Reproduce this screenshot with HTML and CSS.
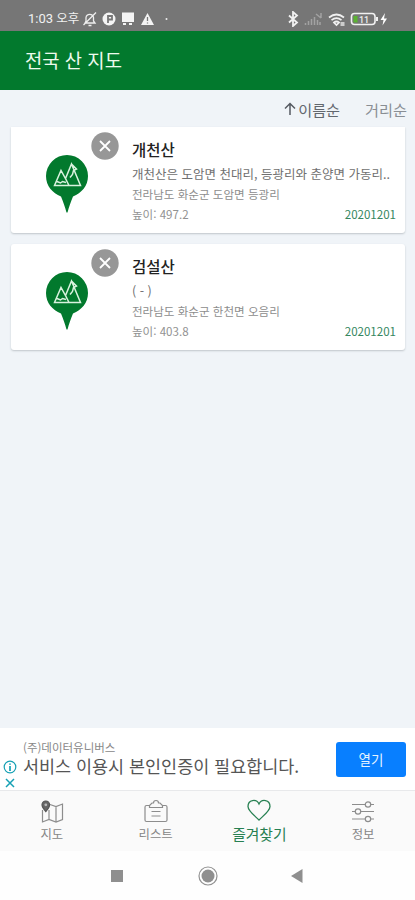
FILE: index.html
```html
<!DOCTYPE html>
<html lang="ko">
<head>
<meta charset="utf-8">
<meta name="viewport" content="width=device-width, initial-scale=1">
<title>전국 산 지도</title>
<link rel="stylesheet" href="styles.css">
</head>
<body>
<svg width="0" height="0" class="defs">
  <symbol id="pin" viewBox="0 0 42 59">
    <path d="M21 0a21 21 0 0 1 21 21c0 10-6.500 17-15 20.500-2 5-4 10-5.500 16h-1C19 51.500 17 46.500 15 41.500 6.500 38 0 31 0 21A21 21 0 0 1 21 0z" fill="#02792d"/>
    <path d="M8.500 30.500 15 15.500l4.500 8 6-14.500L34.500 30.500zM19.500 23.500 23 30.500M11 26.500l3.500 1.500 2-1.500 3.500 1M25.500 9l5 5-3 1.500-1 4-2.500 3" fill="none" stroke="#d9f2de" stroke-width="1.500"/>
  </symbol>
  <symbol id="close" viewBox="0 0 28 28">
    <circle cx="14" cy="14" r="13.700" fill="#979797"/>
    <path d="m9 9 10 10M19 9 9 19" stroke="#fff" stroke-width="1.800"/>
  </symbol>
</svg>
<div class="screen">
  <div class="status">
    <span class="clock">1:03 <span class="ampm">오후</span></span>
    <svg class="notices" width="88" height="16" viewBox="0 0 88 16" fill="none" stroke="#eee" stroke-width="1.300">
      <path d="M3 12h10l-1.500-2V6.500a3.800 3.800 0 0 0-7.500 0V10zM6.500 14.500h3M1.500 14 14 1.500"/>
      <circle cx="27" cy="8" r="6.500" fill="#f4f4f4" stroke="none"/>
      <path d="M26 12V5h4v3.500h-4" stroke="#777" stroke-width="1.800"/>
      <path d="M40 1.500h12v9.500H40zM41 12h3v2h-3zM47 12h3v2h-3z" fill="#f4f4f4" stroke="none"/>
      <path d="m65.500 2 6.500 12H59z" fill="#f4f4f4" stroke="none"/>
      <path d="M65.500 6v4M65.500 11.500v1" stroke="#777"/>
      <circle cx="84.500" cy="8" r="1" fill="#eee" stroke="none"/>
    </svg>
    <svg class="radios" width="102" height="16" viewBox="0 0 102 16" fill="none" stroke="#f1f1f1">
      <path d="m3 4.500 8 7-4 3.500V1l4 3.500-8 7" stroke-width="1.800"/>
      <path d="M19.500 14v-2M22.500 14v-4M25.500 14V8M28.500 14V6M31.500 14V9M34 14v-3M30 3l5 4M35 2v5" stroke="#a2a2a2" stroke-width="1.500"/>
      <path d="M43 6.500q7.500-6 15 0M45.500 9.200q5-4 10 0M48 11.500q2.500-2 5 0l-2.500 2.500z" stroke-width="1.700"/>
      <path d="M54.500 11h4v4h-4z" fill="#ccc" stroke="none"/>
      <rect x="65.500" y="2.500" width="23.500" height="11" rx="3" stroke-width="1.600"/>
      <path d="M67.500 5h4v6.500h-4z" fill="#5bb332" stroke="none"/>
      <path d="M91 6v4" stroke-width="2"/>
      <path d="m99 2-4.500 7h3l-1 5.500 4.500-7h-3z" fill="#fff" stroke="none"/>
      <text x="73" y="11.500" class="charge">11</text>
    </svg>
  </div>
  <header class="appbar">전국 산 지도</header>
  <main class="content">
    <div class="sort">
      <span class="sort-item active"><svg width="12" height="13" viewBox="0 0 12 13" fill="none" stroke="#555a61" stroke-width="1.500"><path d="M6 13V1.500M1 6.500l5-5 5 5"/></svg>이름순</span>
      <span class="sort-item">거리순</span>
    </div>
    <article class="card first">
      <div class="thumb"><svg class="pin"><use href="#pin"/></svg><svg class="close"><use href="#close"/></svg></div>
      <div class="info">
        <h2>개천산</h2>
        <p class="desc">개천산은 도암면 천대리, 등광리와 춘양면 가동리..</p>
        <p class="addr">전라남도 화순군 도암면 등광리</p>
        <div class="meta"><span>높이: 497.2</span><time>20201201</time></div>
      </div>
    </article>
    <article class="card">
      <div class="thumb"><svg class="pin"><use href="#pin"/></svg><svg class="close"><use href="#close"/></svg></div>
      <div class="info">
        <h2>검설산</h2>
        <p class="desc">( - )</p>
        <p class="addr">전라남도 화순군 한천면 오음리</p>
        <div class="meta"><span>높이: 403.8</span><time>20201201</time></div>
      </div>
    </article>
  </main>
  <aside class="ad">
    <svg class="adchoices" width="14" height="30" viewBox="0 0 14 30" fill="none" stroke="#16a0b4" stroke-width="1.200">
      <circle cx="7" cy="7" r="5.800"/><path d="M7 6v5M7 3.500v1.300" stroke-width="1.700"/><path d="m3 19 8 8M11 19l-8 8" stroke-width="1.500"/>
    </svg>
    <div class="ad-text"><div class="ad-brand">(주)데이터유니버스</div><div class="ad-copy">서비스 이용시 본인인증이 필요합니다.</div></div>
    <button class="open">열기</button>
  </aside>
  <nav class="tabs">
    <div class="tab">
      <svg width="26" height="26" viewBox="0 0 26 26" fill="none" stroke="#8d8d8d" stroke-width="1.200"><path d="M3.500 11v12l6.500-2.500 7 2.500 6.500-2.500V5L17 7.500 11 5.500M10 11v9.500M17 7.500V23"/><path d="M6.800 12.500C4.500 10 3 8 3 5.800a3.800 3.800 0 0 1 7.600 0c0 2.200-1.500 4.200-3.800 6.700z" fill="#666" stroke="#555"/><circle cx="6.800" cy="5.800" r="1.400" fill="#bbb" stroke="none"/></svg>
      <span>지도</span>
    </div>
    <div class="tab">
      <svg width="26" height="26" viewBox="0 0 26 26" fill="none" stroke="#8d8d8d" stroke-width="1.200"><path d="M6.500 6.500h-3Q2 6.500 2 8v13q0 1.500 1.500 1.500h19Q24 22.500 24 21V8q0-1.500-1.500-1.500h-3M6.500 8.500V6.500L9 4h1.500q0-2.500 2.500-2.500T15.500 4H17l2.500 2.500v2zM8.500 12.500h9M8.500 17h9"/></svg>
      <span>리스트</span>
    </div>
    <div class="tab selected">
      <svg width="26" height="26" viewBox="0 0 26 26" fill="none" stroke="#278052" stroke-width="1.300"><path d="M13 21C9 17 2 12 2 7.500 2 .5 10.500-.5 13 5c2.500-5.500 11-4.500 11 2.500 0 4.500-7 9.500-11 13.500z"/></svg>
      <span>즐겨찾기</span>
    </div>
    <div class="tab">
      <svg width="26" height="26" viewBox="0 0 26 26" fill="none" stroke="#8d8d8d" stroke-width="1.200"><path d="M2 5.500h13M21 5.500h3M2 12.500h3M11 12.500h13M2 20h13M21 20h3"/><circle cx="18" cy="5.500" r="2.700"/><circle cx="8" cy="12.500" r="2.700"/><circle cx="18" cy="20" r="2.700"/></svg>
      <span>정보</span>
    </div>
  </nav>
  <div class="sysnav">
    <svg width="194" height="22" viewBox="0 0 194 22"><path d="M1 5h12v12H1z" fill="#8f8f8f"/><circle cx="98" cy="11" r="9" fill="none" stroke="#929292" stroke-width="1.200"/><circle cx="98" cy="11" r="6.500" fill="#8f8f8f"/><path d="m181 11 11.500-7v14z" fill="#8f8f8f"/></svg>
  </div>
</div>
</body>
</html>
```
FILE: styles.css
```css
* { box-sizing: border-box; }
body { margin: 0; font-family: "Noto Sans CJK KR", sans-serif; }
h2, p { margin: 0; }
svg { display: block; flex: none; }
.defs { position: absolute; }
.screen { width: 415px; height: 900px; display: flex; flex-direction: column; overflow: hidden; background: #f0f4f8; }
.status { height: 31px; flex: none; background: #767676; display: flex; align-items: center; padding: 7px 27px 0 28px; color: #f1f1f1; }
.clock { width: 54px; font: 400 13px/16px Roboto, "Noto Sans CJK KR", sans-serif; white-space: nowrap; }
.ampm { font-size: 12.500px; }
.radios { margin-left: auto; }
.charge { font: 500 9px "Roboto", sans-serif; fill: #eee; stroke: none; }
.appbar { height: 59px; flex: none; background: #02792d; color: #eefbed; font-size: 18.800px; line-height: 58px; padding-left: 25px; }
.content { flex: 1; padding: 0 10px; }
.sort { height: 37px; display: flex; justify-content: flex-end; gap: 25px; margin-right: -2px; line-height: 38px; }
.sort-item { display: flex; align-items: center; gap: 2px; font-size: 15.200px; color: #898e94; }
.active { color: #62676e; }
.card { height: 106px; display: flex; margin: 0 0 11px 1px; padding-right: 9px; background: #fff; border-radius: 3px; box-shadow: 0 1px 2px #bfc5ca; width: 394px; }
.first { border-radius: 0 0 3px 3px; }
.thumb { width: 121px; display: flex; padding: 28px 0 0 35px; }
.pin { width: 42px; height: 59px; }
.close { width: 28px; height: 28px; margin: -23px 0 0 3px; }
.info { flex: 1; padding-top: 11px; white-space: nowrap; }
.info h2 { font-size: 15.500px; font-weight: 500; line-height: 23px; color: #222; }
.desc { font-size: 12.500px; line-height: 25px; color: #707070; }
.addr { font-size: 11.550px; line-height: 17px; color: #8d8d8d; }
.meta { display: flex; justify-content: space-between; font-size: 11.550px; line-height: 22px; color: #929292; }
.meta time { color: #36875f; }
.ad { height: 62px; flex: none; display: flex; background: #fff; padding: 0 9px 0 3px; }
.adchoices { margin-top: 32px; }
.ad-text { margin: 11px 0 0 6px; white-space: nowrap; }
.ad-brand { font-size: 11.500px; line-height: 17px; color: #888; }
.ad-copy { font-size: 17.450px; line-height: 20px; color: #555; }
.open { margin: 14px 0 0 auto; width: 70px; height: 35px; padding: 0; border: 0; border-radius: 3px; background: #087fff; color: #e5f2ff; font: 400 13.500px/33px "Noto Sans CJK KR", sans-serif; }
.tabs { height: 61px; flex: none; display: grid; grid-template-columns: repeat(4, 1fr); background: #fafafa; border-top: 1px solid #e8e9eb; }
.tab { display: flex; flex-direction: column; align-items: center; padding-top: 8px; font-size: 12.400px; line-height: 19px; color: #868686; white-space: nowrap; }
.selected { font-size: 14.800px; line-height: 17px; color: #278052; }
.sysnav { height: 49px; flex: none; display: flex; justify-content: center; background: #fefefe; padding: 14px 2px 0 0; }
```
